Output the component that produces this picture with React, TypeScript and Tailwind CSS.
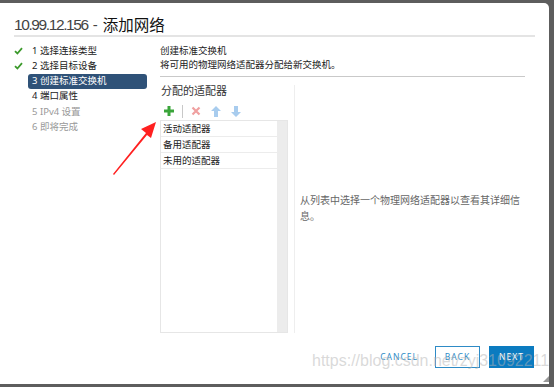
import React from 'react';

const steps = [
  { n: 1, label: '选择连接类型', done: true },
  { n: 2, label: '选择目标设备', done: true },
  { n: 3, label: '创建标准交换机', active: true },
  { n: 4, label: '端口属性' },
  { n: 5, label: 'IPv4 设置', muted: true },
  { n: 6, label: '即将完成', muted: true },
];

const adapters = ['活动适配器', '备用适配器', '未用的适配器'];

function Check() {
  return (
    <svg width="9" height="8" viewBox="0 0 9 8" className="shrink-0">
      <path d="M1 4.2 L3.4 6.5 L8 1.2" fill="none" stroke="#3c9a2c" strokeWidth="1.8" />
    </svg>
  );
}

function Toolbar() {
  return (
    <div className="flex items-center h-[14px] pl-[4px] gap-[8px]">
      <svg width="10" height="10" viewBox="0 0 10 10">
        <path d="M3.5 0h3v3.5H10v3H6.5V10h-3V6.5H0v-3h3.5z" fill="#3aa53a" />
      </svg>
      <div className="w-px h-[13px] bg-[#c8c8c8]" />
      <svg width="10" height="10" viewBox="0 0 10 10">
        <path d="M1.5 1.5 L8.5 8.5 M8.5 1.5 L1.5 8.5" stroke="#f0a0a0" strokeWidth="2.2" />
      </svg>
      <svg width="10" height="11" viewBox="0 0 10 11" className="ml-[2px]">
        <path d="M5 0 L10 5 H7 V11 H3 V5 H0 Z" fill="#a8ccee" />
      </svg>
      <svg width="10" height="11" viewBox="0 0 10 11" className="ml-[2px]">
        <path d="M5 11 L10 6 H7 V0 H3 V6 H0 Z" fill="#a8ccee" />
      </svg>
    </div>
  );
}

export default function App() {
  return (
    <div
      className="relative w-[554px] h-[387px] bg-[#5d5d5d] pt-[3px] pr-[5px] pb-[3px] overflow-hidden"
      style={{ fontFamily: '"Noto Sans", "Noto Sans CJK SC", sans-serif' }}
    >
      <div className="w-full h-full bg-white rounded-tr-[5px] flex flex-col">
        {/* title */}
        <div className="mx-[14px] h-[34px] flex items-end border-b-2 border-[#e4e4e4]">
          <span
            className="text-[15.5px] leading-[20px] text-[#444] tracking-[-1.4px]"
            style={{ fontFamily: '"Liberation Sans", sans-serif' }}
          >
            10.99.12.156
          </span>
          <span className="text-[15px] leading-[20px] text-[#444] mx-[5px]" style={{ fontFamily: '"Liberation Sans", sans-serif' }}>
            -
          </span>
          <span className="text-[15.5px] leading-[20px] text-[#111]">添加网络</span>
        </div>

        <div className="flex flex-1">
          {/* wizard steps */}
          <div className="w-[160px] pt-[6px] pl-[14px]">
            {steps.map((s) => (
              <div key={s.n} className="flex items-center h-[15.3px]">
                <div className="w-[14px] flex justify-start">{s.done && <Check />}</div>
                <div
                  className={
                    s.active
                      ? 'flex-1 mr-[13px] h-[15px] rounded-[3px] bg-[#2f5278] text-white pl-[4px] flex items-center text-[9.5px]'
                      : s.muted
                      ? 'pl-[4px] text-[#999] text-[9.5px]'
                      : 'pl-[4px] text-[#222] text-[9.5px]'
                  }
                >
                  {s.n} {s.label}
                </div>
              </div>
            ))}
          </div>

          {/* content */}
          <div className="flex-1 flex flex-col pr-[14px]">
            <div className="pt-[7px] pb-[4px] mr-[10px] border-b border-[#c9c9c9] text-[9.5px] text-[#222] leading-[14px]">
              <div>创建标准交换机</div>
              <div>将可用的物理网络适配器分配给新交换机。</div>
            </div>

            <div className="flex flex-1 pt-[7px] pb-[13px]">
              <div className="w-[128px] flex flex-col">
                <div className="text-[11px] text-[#333] leading-[14px] pl-[1px]">分配的适配器</div>
                <div className="mt-[6px]">
                  <Toolbar />
                </div>
                <div className="mt-[2px] flex-1 flex border border-[#e6e6e6] bg-white">
                  <div className="flex-1 flex flex-col">
                    {adapters.map((a) => (
                      <div key={a} className="h-[16px] border-b border-[#ececec] text-[9.5px] text-[#222] pl-[2px] leading-[15px]">
                        {a}
                      </div>
                    ))}
                  </div>
                  <div className="w-[10px] bg-[#ececec]" />
                </div>
              </div>
              <div className="w-px bg-[#eeeeee] ml-[6px] mt-[1px]" />
              <div className="flex-1 flex items-center pl-[5px] pb-[2px]">
                <div className="w-[224px] text-[10px] leading-[16px] text-[#666]">
                  从列表中选择一个物理网络适配器以查看其详细信息。
                </div>
              </div>
            </div>
          </div>
        </div>

        {/* footer */}
        <div className="h-[38px] flex items-start justify-end pr-[15px] gap-[9px]">
          <div className="h-[22px] px-[8px] flex items-center text-[8.5px] tracking-[1px] text-[#2e8bc6]">CANCEL</div>
          <div className="w-[45px] h-[22px] border border-[#2e8bc6] flex items-center justify-center text-[8.5px] tracking-[1px] text-[#2e8bc6]">BACK</div>
          <div className="w-[45px] h-[22px] bg-[#0b7bc0] flex items-center justify-center text-[8.5px] tracking-[1px] text-white">NEXT</div>
        </div>
      </div>

      {/* red annotation arrow */}
      <svg className="absolute left-[108px] top-[118px]" width="52" height="60" viewBox="0 0 52 60">
        <path d="M5 56 L38 15 L33 11 L48 4 L43 20 L39 17 L6 57 Z" fill="#ff2020" />
      </svg>

      {/* resize grip */}
      <svg className="absolute left-[543px] top-[376px]" width="6" height="6" viewBox="0 0 6 6">
        <path d="M6 0 L6 6 L0 6 Z" fill="#999" />
      </svg>

      {/* watermark */}
      <div
        className="absolute left-[312px] top-[351px] text-[16px] leading-[20px] text-[#b4b4b4]/50 whitespace-nowrap pointer-events-none"
        style={{ fontFamily: '"Liberation Sans", sans-serif' }}
      >
        https://blog.csdn.net/zyj31092211
      </div>
    </div>
  );
}
